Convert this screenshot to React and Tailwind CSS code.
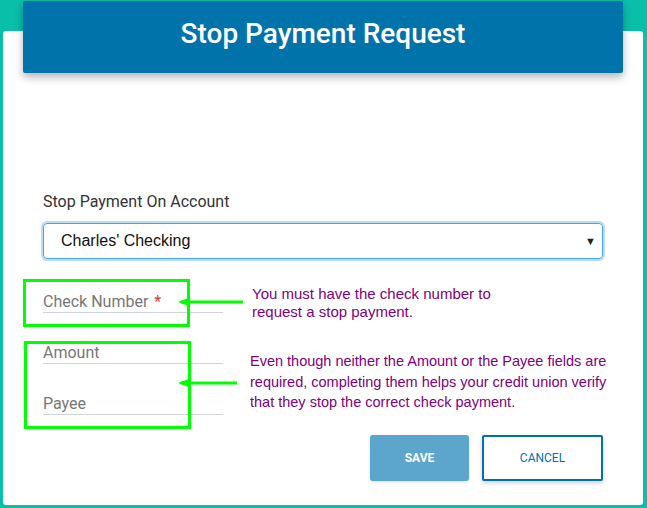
const FIELDS = [
  { label: 'Check Number', required: true, gap: 'mt-[33px]' },
  { label: 'Amount', required: false, gap: 'mt-[30px]' },
  { label: 'Payee', required: false, gap: 'mt-[30px]' },
]

function Arrow({ x, y, w }) {
  return (
    <svg className="absolute" style={{ left: x, top: y - 6 }} width={w} height={12} viewBox={`0 0 ${w} 12`}>
      <path d={`M3 6 L${w} 6`} stroke="#00ff00" strokeWidth="3" />
      <path d="M0 6 L12 1.5 L12 10.5 Z" fill="#00ff00" />
    </svg>
  )
}

export default function App() {
  return (
    <div className="relative h-[508px] w-[647px] overflow-hidden bg-[#09bfaa] pt-[31px] pl-[3px]" style={{ fontFamily: 'Roboto, "Liberation Sans", sans-serif' }}>
      <div className="flex h-[474px] w-[640px] flex-col rounded-[3px] bg-white px-[40px]">
        <div className="-mx-[20px] -mt-[30px] flex h-[72px] items-center justify-center rounded-[2px] bg-[#0073ab] pb-[6px] shadow-[0_4px_8px_rgba(0,0,0,0.3)]">
          <h1 className="text-[28px] font-medium text-white">Stop Payment Request</h1>
        </div>

        <label className="mt-[119px] text-[16px] leading-[19px] text-[#333]">Stop Payment On Account</label>
        <div className="mt-[12px] flex h-[36px] items-center justify-between rounded-[4px] border border-[#42a5f5] pl-[17px] pr-[6px] shadow-[0_0_0_2px_#bcdcef]" style={{ fontFamily: '"Liberation Sans", Arial, sans-serif' }}>
          <span className="text-[16px] text-[#111]">Charles' Checking</span>
          <span className="text-[11px] text-[#222]">▼</span>
        </div>

        <div className="flex flex-col">
          {FIELDS.map(f => (
            <div key={f.label} className={`${f.gap} w-[180px] border-b border-[#ced4da] pb-px text-[16px] leading-[19px] text-[#777]`}>
              {f.label}
              {f.required && <span className="ml-[6px] text-[#e53935]">*</span>}
            </div>
          ))}
        </div>

        <div className="mt-auto mb-[24px] flex justify-end gap-[13px]">
          <button className="h-[46px] w-[99px] rounded-[3px] bg-[#5ca5cc] text-[12px] font-bold text-white shadow-[0_1px_3px_rgba(0,0,0,0.15)]">SAVE</button>
          <button className="h-[46px] w-[121px] rounded-[2px] border-2 border-[#0073ab] bg-white text-[12px] text-[#0073ab] shadow-[0_2px_4px_rgba(0,0,0,0.2)]">CANCEL</button>
        </div>
      </div>

      <div className="absolute left-[23px] top-[279px] h-[48px] w-[167px] border-[3px] border-[#00ff00]" />
      <div className="absolute left-[24px] top-[341px] h-[88px] w-[167px] border-[3px] border-[#00ff00]" />
      <Arrow x={178} y={302} w={65} />
      <Arrow x={178} y={383} w={59} />

      <p className="absolute left-[252px] top-[285px] w-[270px] text-[15px] leading-[18px] text-[#800080]" style={{ fontFamily: '"Liberation Sans", Arial, sans-serif' }}>
        You must have the check number to request a stop payment.
      </p>
      <p className="absolute left-[250px] top-[351px] w-[375px] text-[14.5px] leading-[20.5px] text-[#800080]" style={{ fontFamily: '"Liberation Sans", Arial, sans-serif' }}>
        Even though neither the Amount or the Payee fields are required, completing them helps your credit union verify that they stop the correct check payment.
      </p>
    </div>
  )
}
